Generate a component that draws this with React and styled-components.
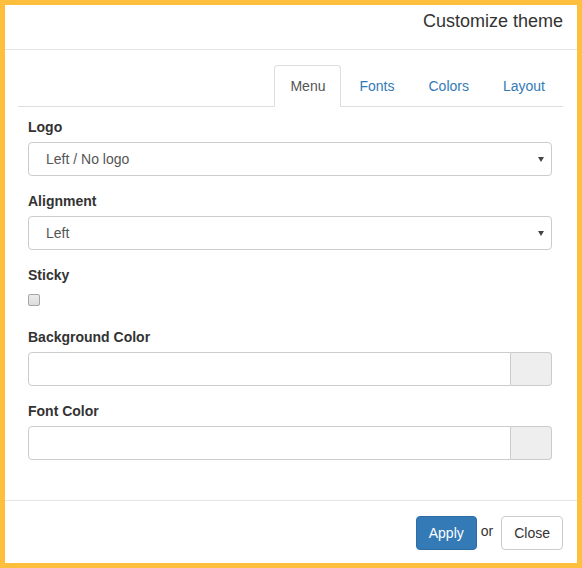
import styled, { createGlobalStyle } from 'styled-components';

const GlobalStyle = createGlobalStyle`
  html, body {
    margin: 0;
    padding: 0;
    background: #fff;
  }
  body {
    font-family: "Liberation Sans", Arial, Helvetica, sans-serif;
    font-size: 14px;
    line-height: 1.42857;
    color: #333;
  }
  * {
    box-sizing: border-box;
  }
`;

const Modal = styled.div`
  width: 582px;
  height: 568px;
  border: 5px solid #fdbf3c;
  background: #fff;
  display: flex;
  flex-direction: column;
  overflow: hidden;
`;

const Header = styled.div`
  padding: 6px 14px 18px;
  border-bottom: 1px solid #e5e5e5;
  text-align: right;
`;

const Title = styled.h4`
  margin: 0;
  font-size: 18px;
  font-weight: normal;
  line-height: 20px;
  color: #333;
`;

const Body = styled.div`
  padding: 15px 14px 15px 13px;
`;

const Tabs = styled.ul`
  display: flex;
  justify-content: flex-end;
  list-style: none;
  margin: 0;
  padding: 0;
  border-bottom: 1px solid #ddd;
`;

const Tab = styled.li`
  margin: 0 2px -1px 0;
  padding: 10px 15px;
  line-height: 20px;
  border: 1px solid ${(p) => (p.$active ? '#ddd' : 'transparent')};
  border-bottom-color: ${(p) => (p.$active ? '#fff' : 'transparent')};
  border-radius: 4px 4px 0 0;
  background: ${(p) => (p.$active ? '#fff' : 'transparent')};
  color: ${(p) => (p.$active ? '#555' : '#337ab7')};
  cursor: ${(p) => (p.$active ? 'default' : 'pointer')};
`;

const TabContent = styled.div`
  padding: 10px 11px 10px 10px;
`;

const FormGroup = styled.div`
  margin-bottom: 15px;
`;

const Label = styled.label`
  display: block;
  margin-bottom: 5px;
  font-weight: bold;
  line-height: 20px;
`;

const SelectWrap = styled.div`
  position: relative;

  &::after {
    content: '';
    position: absolute;
    right: 8px;
    top: 50%;
    margin-top: -2px;
    border-left: 3px solid transparent;
    border-right: 3px solid transparent;
    border-top: 5px solid #444;
    pointer-events: none;
  }
`;

const Select = styled.select`
  display: block;
  width: 100%;
  height: 34px;
  padding: 6px 20px 6px 17px;
  appearance: none;
  font-family: inherit;
  font-size: 14px;
  color: #555;
  background: #fff;
  border: 1px solid #ccc;
  border-radius: 4px;
  outline: none;
`;

const CheckRow = styled.div`
  height: 22px;
  padding-top: 4px;
`;

const Checkbox = styled.input`
  appearance: none;
  display: block;
  width: 12px;
  height: 12px;
  margin: 0;
  border: 1px solid #a6a6a6;
  border-radius: 2px;
  background: linear-gradient(#ececec, #dcdcdc);
`;

const InputGroup = styled.div`
  display: flex;
`;

const Input = styled.input`
  flex: 1;
  min-width: 0;
  height: 34px;
  padding: 6px 12px;
  font-family: inherit;
  font-size: 14px;
  color: #555;
  border: 1px solid #ccc;
  border-radius: 4px 0 0 4px;
  outline: none;
`;

const Addon = styled.span`
  width: 41px;
  height: 34px;
  background: #eee;
  border: 1px solid #ccc;
  border-left: 0;
  border-radius: 0 4px 4px 0;
`;

const Footer = styled.div`
  margin-top: auto;
  display: flex;
  justify-content: flex-end;
  align-items: baseline;
  padding: 15px 14px 13px;
  border-top: 1px solid #e5e5e5;
`;

const Button = styled.button`
  padding: 6px 12px;
  font-family: inherit;
  font-size: 14px;
  line-height: 20px;
  border-radius: 4px;
  border: 1px solid ${(p) => (p.$primary ? '#2e6da4' : '#ccc')};
  background: ${(p) => (p.$primary ? '#337ab7' : '#fff')};
  color: ${(p) => (p.$primary ? '#fff' : '#333')};
  cursor: pointer;
`;

const Or = styled.span`
  margin: 0 8px 0 4px;
  color: #333;
  position: relative;
  top: -2px;
`;

const tabs = ['Menu', 'Fonts', 'Colors', 'Layout'];

const ColorField = ({ label }) => (
  <FormGroup>
    <Label>{label}</Label>
    <InputGroup>
      <Input type='text' />
      <Addon />
    </InputGroup>
  </FormGroup>
);

const SelectField = ({ label, value }) => (
  <FormGroup>
    <Label>{label}</Label>
    <SelectWrap>
      <Select defaultValue={value}>
        <option>{value}</option>
      </Select>
    </SelectWrap>
  </FormGroup>
);

export default function App() {
  return (
    <>
      <GlobalStyle />
      <Modal>
        <Header>
          <Title>Customize theme</Title>
        </Header>
        <Body>
          <Tabs>
            {tabs.map((t) => (
              <Tab key={t} $active={t === 'Menu'}>
                {t}
              </Tab>
            ))}
          </Tabs>
          <TabContent>
            <SelectField label='Logo' value='Left / No logo' />
            <SelectField label='Alignment' value='Left' />
            <FormGroup>
              <Label>Sticky</Label>
              <CheckRow>
                <Checkbox type='checkbox' />
              </CheckRow>
            </FormGroup>
            <ColorField label='Background Color' />
            <ColorField label='Font Color' />
          </TabContent>
        </Body>
        <Footer>
          <Button $primary>Apply</Button>
          <Or>or</Or>
          <Button>Close</Button>
        </Footer>
      </Modal>
    </>
  );
}
